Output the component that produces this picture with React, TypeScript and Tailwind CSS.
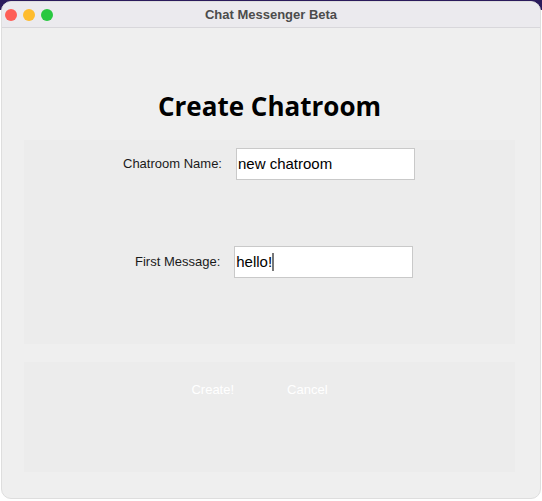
export default function App() {
  return (
    <div className="w-[542px] h-[501px] bg-[linear-gradient(to_bottom,#2b1b5c_0px,#2b1b5c_10px,#ffffff_10px)] pt-px">
      <div
        className="ml-[1px] w-[540px] h-[498px] rounded-[10px] overflow-hidden bg-[#efefef] flex flex-col border border-[#dedede]"
        style={{ fontFamily: '"Liberation Sans", Arial, sans-serif' }}
      >
        {/* title bar */}
        <div className="h-[26px] shrink-0 bg-[#ebeaee] border-b border-[#d8d7db] flex items-center relative">
          <div className="flex items-center gap-[6px] pl-[3px]">
            <span className="w-[12px] h-[12px] rounded-full bg-[#fe5f57]" />
            <span className="w-[12px] h-[12px] rounded-full bg-[#febc2e]" />
            <span className="w-[12px] h-[12px] rounded-full bg-[#28c840]" />
          </div>
          <div className="absolute inset-0 flex items-center justify-center text-[13px] font-bold text-[#4c4c4c]">
            Chat Messenger Beta
          </div>
        </div>

        {/* body */}
        <div className="flex flex-col pl-[22px] pt-[60px]">
          <h1
            className="w-[491px] text-center text-[26px] leading-[36px] font-bold text-black"
            style={{ fontFamily: '"Open Sans", "DejaVu Sans", sans-serif' }}
          >
            Create Chatroom
          </h1>

          <div className="mt-[16px] w-[491px] h-[204px] bg-[#ececec] flex flex-col pt-[8px]">
            <div className="flex items-center pl-[99px]">
              <span className="text-[13px] text-[#1a1a1a] whitespace-nowrap">Chatroom Name:</span>
              <div className="ml-[14px] w-[179px] h-[32px] bg-white border border-[#c9c9c9] flex items-center pl-[1px] text-[15px] text-black">
                new chatroom
              </div>
            </div>
            <div className="flex items-center pl-[111px] mt-[66px]">
              <span className="text-[13px] text-[#1a1a1a] whitespace-nowrap">First Message:</span>
              <div className="ml-[14px] w-[179px] h-[32px] bg-white border border-[#c9c9c9] flex items-center pl-[1px] text-[15px] text-black">
                hello!
                <span className="w-[2px] h-[18px] bg-[#777] ml-0" />
              </div>
            </div>
          </div>

          <div className="mt-[18px] w-[491px] h-[110px] bg-[#ececec] flex justify-center gap-[53px] pt-[20px] pr-[20px]">
            <button className="h-[16px] text-[13px] leading-[16px] text-white">Create!</button>
            <button className="h-[16px] text-[13px] leading-[16px] text-white">Cancel</button>
          </div>
        </div>
      </div>
    </div>
  );
}
